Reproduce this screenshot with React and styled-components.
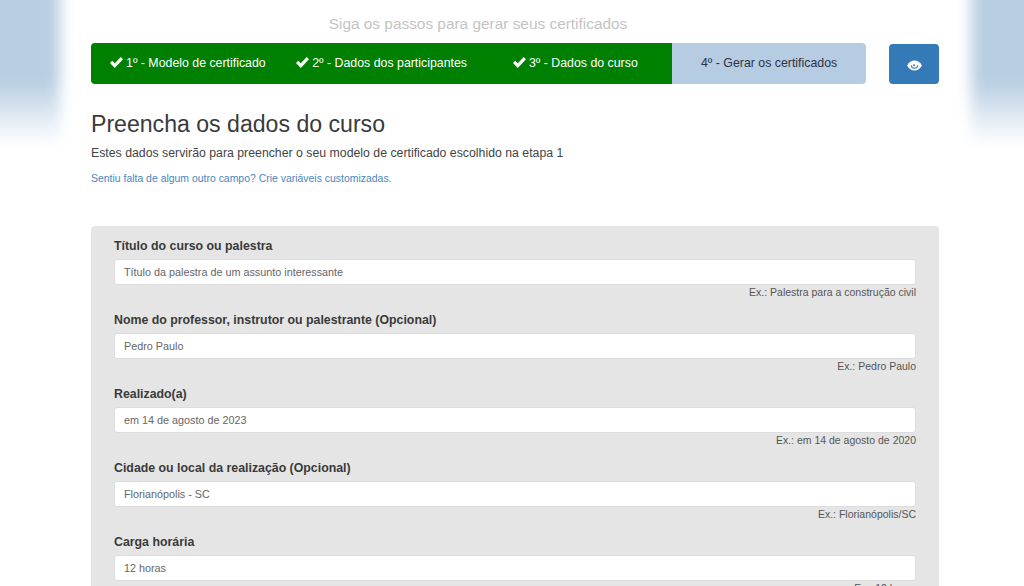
import React from "react";
import styled, { createGlobalStyle } from "styled-components";

const steps = [
  { label: "1º - Modelo de certificado", done: true },
  { label: "2º - Dados dos participantes", done: true },
  { label: "3º - Dados do curso", done: true },
  { label: "4º - Gerar os certificados", done: false },
];

const fields = [
  { label: "Título do curso ou palestra", value: "Título da palestra de um assunto interessante", hint: "Ex.: Palestra para a construção civil" },
  { label: "Nome do professor, instrutor ou palestrante (Opcional)", value: "Pedro Paulo", hint: "Ex.: Pedro Paulo" },
  { label: "Realizado(a)", value: "em 14 de agosto de 2023", hint: "Ex.: em 14 de agosto de 2020" },
  { label: "Cidade ou local da realização (Opcional)", value: "Florianópolis - SC", hint: "Ex.: Florianópolis/SC" },
  { label: "Carga horária", value: "12 horas", hint: "Ex.: 12 horas" },
];

function CheckIcon() {
  return (
    <svg width="13" height="11" viewBox="0 0 13 11" fill="currentColor" aria-hidden="true">
      <path d="M0 6l2.2-2.2L4.8 6.300 10.700 0 13 2.200 4.800 11z" />
    </svg>
  );
}

function EyeIcon() {
  return (
    <svg width="15" height="11" viewBox="0 0 15 11" aria-hidden="true">
      <path d="M0 5.500C2 2 4.500 0.500 7.500 0.500S13 2 15 5.500C13 9 10.500 10.500 7.500 10.500S2 9 0 5.500z" fill="#fff" />
      <path d="M4.300 5.200C4.500 7.200 5.800 8.300 7.500 8.300S10.500 7.200 10.700 5.200" fill="none" stroke="#337ab7" strokeWidth="1.100" />
      <circle cx="7" cy="5.200" r="1" fill="#337ab7" />
    </svg>
  );
}

function App() {
  return (
    <Page>
      <GlobalStyle />
      <SideGlow $side="left" />
      <SideGlow $side="right" />
      <Container>
        <Tagline>Siga os passos para gerar seus certificados</Tagline>
        <StepsRow>
          <Steps>
            {steps.map((step) => (
              <Step key={step.label} $done={step.done}>
                {step.done && <CheckIcon />}
                {step.label}
              </Step>
            ))}
          </Steps>
          <PreviewButton aria-label="Visualizar">
            <EyeIcon />
          </PreviewButton>
        </StepsRow>
        <Heading>Preencha os dados do curso</Heading>
        <Lead>Estes dados servirão para preencher o seu modelo de certificado escolhido na etapa 1</Lead>
        <SmallLink href="#">Sentiu falta de algum outro campo? Crie variáveis customizadas.</SmallLink>
        <Panel>
          {fields.map((field) => (
            <Field key={field.label}>
              <Label>{field.label}</Label>
              <Input defaultValue={field.value} />
              <Hint>{field.hint}</Hint>
            </Field>
          ))}
        </Panel>
      </Container>
    </Page>
  );
}

const GlobalStyle = createGlobalStyle`
  html, body {
    margin: 0;
    height: 586px;
    overflow: hidden;
    background: #fff;
  }
  * {
    box-sizing: border-box;
  }
`;

const Page = styled.div`
  position: relative;
  height: 586px;
  overflow: hidden;
  font-family: "Liberation Sans", Arial, sans-serif;
  color: #333;
  background: #fff;
`;

const SideGlow = styled.div`
  position: absolute;
  top: -40px;
  ${(p) => (p.$side === "left" ? "left: -40px; width: 100px;" : "right: -40px; width: 93px;")}
  height: 185px;
  background: linear-gradient(#b8cee3 0, #b8cee3 65%, rgba(184, 206, 227, 0) 100%);
  filter: blur(7px);
`;

const Container = styled.div`
  position: relative;
  width: 848px;
  margin-left: 91px;
`;

const Tagline = styled.div`
  height: 43px;
  padding-top: 14px;
  padding-right: 74px;
  text-align: center;
  font-size: 15.4px;
  line-height: 20px;
  color: #c4c4c4;
`;

const StepsRow = styled.div`
  display: flex;
  justify-content: space-between;
  align-items: flex-end;
  height: 41px;
`;

const Steps = styled.div`
  display: grid;
  grid-template-columns: repeat(4, 1fr);
  width: 775px;
  height: 41px;
  border-radius: 4px;
  overflow: hidden;
`;

const Step = styled.div`
  display: flex;
  align-items: center;
  justify-content: center;
  gap: 3px;
  padding-bottom: 2px;
  font-size: 12.35px;
  white-space: nowrap;
  background: ${(p) => (p.$done ? "#008000" : "#b5cce2")};
  color: ${(p) => (p.$done ? "#fff" : "#2c3244")};
`;

const PreviewButton = styled.button`
  display: flex;
  align-items: center;
  justify-content: center;
  width: 50px;
  height: 40px;
  padding: 2px 0 0;
  border: none;
  border-radius: 4px;
  background: #337ab7;
  color: #fff;
`;

const Heading = styled.h1`
  margin: 26px 0 0;
  font-size: 23.1px;
  font-weight: 400;
  line-height: 28px;
  color: #3a3a3a;
`;

const Lead = styled.p`
  margin: 5px 0 0;
  font-size: 12.3px;
  line-height: 20px;
  color: #444;
`;

const SmallLink = styled.a`
  display: block;
  margin-top: 8px;
  font-size: 10.45px;
  line-height: 16px;
  color: #4a86bd;
  text-decoration: none;
`;

const Panel = styled.div`
  margin-top: 39px;
  padding: 12px 23px 0;
  border-radius: 4px;
  background: #e5e5e5;
`;

const Field = styled.div`
  display: flex;
  flex-direction: column;
  height: 74.1px;
`;

const Label = styled.label`
  font-size: 12.35px;
  font-weight: 700;
  line-height: 16px;
  color: #3a3a3a;
`;

const Input = styled.input`
  width: 100%;
  height: 26px;
  margin-top: 5px;
  padding: 0 9px;
  border: 1px solid #ddd;
  border-radius: 3px;
  background: #fff;
  font-family: inherit;
  font-size: 10.8px;
  color: #666;
`;

const Hint = styled.span`
  text-align: right;
  font-size: 10.5px;
  line-height: 14px;
  color: #555;
`;

export default App;
